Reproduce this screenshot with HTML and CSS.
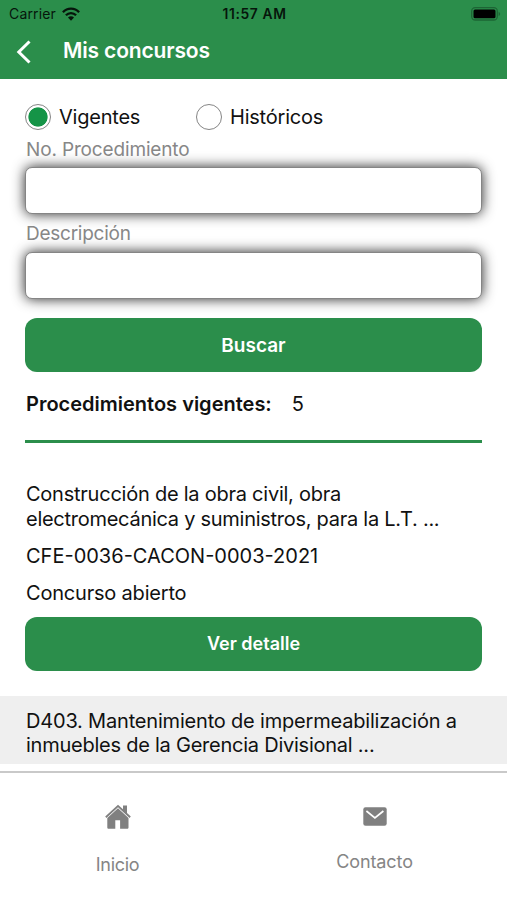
FILE: index.html
```html
<!DOCTYPE html>
<html lang="es">
<head>
<meta charset="utf-8">
<title>Mis concursos</title>
<link rel="stylesheet" href="styles.css">
</head>
<body>
<header class="header">
  <div class="status">
    <div class="carrier"><span class="carrier-name">Carrier</span>
      <svg class="wifi" width="18" height="14" viewBox="0 0 18 14" fill="none" stroke="#06150b" stroke-width="2.3"><path d="M.9 5.2C5.4.3 12.6.3 17.1 5.2M3.9 8.3c2.9-3 7.3-3 10.2 0"/><path d="M9 13.7l-3-3.2c1.7-1.6 4.3-1.6 6 0z" fill="#06150b" stroke="none"/></svg>
    </div>
    <span class="time">11:57 AM</span>
    <svg class="battery" width="30" height="14" viewBox="0 0 30 14"><rect x=".7" y=".7" width="25.6" height="12.3" rx="3.5" fill="none" stroke="#1d6535" stroke-width="1.3"/><rect x="2.5" y="2.5" width="22" height="8.8" rx="1.5"/><path d="M27.6 4.7c2 .8 2 3.5 0 4.3z" fill="#1d6535"/></svg>
  </div>
  <div class="titlebar">
    <svg class="back" width="16" height="24" viewBox="0 0 16 24" fill="none" stroke="#fff" stroke-width="3"><path d="M13.5 1.5L2.8 12l10.7 10.5"/></svg>
    <h1 class="title">Mis concursos</h1>
  </div>
</header>
<main class="content">
  <form class="search">
    <div class="radios">
      <div class="option"><span class="radio checked"></span><span class="vigentes">Vigentes</span></div>
      <div class="option"><span class="radio"></span><span class="historicos">Históricos</span></div>
    </div>
    <label class="label procedure" for="num">No. Procedimiento</label>
    <input class="field" id="num">
    <label class="label description" for="desc">Descripción</label>
    <input class="field" id="desc">
    <button class="button" type="button"><span class="buscar">Buscar</span></button>
  </form>
  <div class="summary"><strong class="summary-label">Procedimientos vigentes:</strong><span>5</span></div>
  <article class="item">
    <p class="text desc"><span class="d1">Construcción de la obra civil, obra</span><br><span class="d2">electromecánica y suministros, para la L.T. ...</span></p>
    <p class="text code">CFE-0036-CACON-0003-2021</p>
    <p class="text state">Concurso abierto</p>
    <button class="button" type="button"><span class="detalle">Ver detalle</span></button>
  </article>
  <article class="item shaded">
    <p class="text desc"><span class="m1">D403. Mantenimiento de impermeabilización a</span><br><span class="m2">inmuebles de la Gerencia Divisional ...</span></p>
  </article>
</main>
<nav class="tabs">
  <div class="tab home">
    <svg width="26" height="26" viewBox="0 0 26 26" fill="#808080"><path d="M13 .7L.2 12.6l1.2 1.3L13 3.2l11.6 10.7 1.2-1.3-3.8-3.6V1.5h-4v3.8z"/><path d="M13 4.2L2.3 14v9.4c0 .9.5 1.4 1.4 1.4h6.6v-8.6h4.8v8.6h7c.9 0 1.4-.5 1.4-1.4V14z"/></svg>
    <span class="inicio">Inicio</span>
  </div>
  <div class="tab contact">
    <svg width="24" height="19" viewBox="0 0 24 19"><rect x=".3" y=".3" width="23.4" height="18.4" rx="2.2" fill="#808080"/><path d="M3.4 4l8.5 7 8.5-7" fill="none" stroke="#fff" stroke-width="1.7"/></svg>
    <span class="contacto">Contacto</span>
  </div>
</nav>
</body>
</html>
```

FILE: styles.css
```css
* { box-sizing: border-box; }
body {
  margin: 0;
  width: 507px;
  height: 900px;
  overflow: hidden;
  display: flex;
  flex-direction: column;
  background: #fff;
  color: #111;
  font: 20px/24.5px Inter, "Liberation Sans", sans-serif;
}
span, strong { white-space: nowrap; }
.header { height: 79px; flex: none; background: #2b8e4b; }
.status {
  height: 27px;
  display: grid;
  grid-template-columns: 1fr auto 1fr;
  align-items: center;
  padding: 0 6px 0 9px;
  font-size: 14px;
  line-height: 20px;
  color: #06150b;
}
.carrier { display: flex; align-items: center; gap: 6px; }
.carrier-name { letter-spacing: .15px; }
.time { font-weight: 600; font-size: 13.8px; letter-spacing: .65px; margin-right: 1px; }
.battery { justify-self: end; }
.titlebar { height: 49px; display: flex; align-items: center; padding-left: 16px; }
.title { margin: 0 0 1px 31px; color: #fff; font-size: 21px; font-weight: 600; line-height: 26px; letter-spacing: -.15px; }
.content { flex: 1; min-height: 0; overflow: hidden; }
.search { padding: 24px 25px 0; }
.radios { display: flex; height: 28px; letter-spacing: -.22px; }
.option { display: flex; align-items: center; gap: 8px; width: 171px; }
.radio { width: 26px; height: 26px; flex: none; border: 1.3px solid #858585; border-radius: 50%; background: #fff; }
.radio.checked { background: radial-gradient(circle, #159447 9.2px, #fff 10px); }
.label { display: block; height: 24px; margin-top: 7px; color: #878787; padding-left: 1px; font-size: 19px; letter-spacing: -.15px; }
.field {
  display: block;
  width: 100%;
  height: 47px;
  margin-top: 5px;
  border: 1.5px solid #858585;
  border-radius: 7px;
  background: #fff;
  box-shadow: 0 0 13px rgba(0, 0, 0, .85);
}
.description { margin-top: 8px; letter-spacing: -.25px; }
.description + .field { margin-top: 6px; }
.button {
  display: block;
  width: 100%;
  height: 53.5px;
  padding: 0;
  border: 0;
  border-radius: 12px;
  background: #2b8e4b;
  color: #fff;
  font: 600 19px/24px Inter, "Liberation Sans", sans-serif;
}
.buscar { position: relative; top: 1px; }
.detalle { font-size: 18px; }
.search .button { margin-top: 19px; }
.summary {
  display: flex;
  gap: 20px;
  height: 71px;
  margin: 0 25px;
  padding: 20.5px 0 0 1px;
  border-bottom: 3px solid #2b8e4b;
}
.summary-label { font-weight: 600; }
.item { padding: 39.5px 25px 25px; }
.text { margin: 0 0 12.5px 1px; }
.item .state { margin-bottom: 12px; letter-spacing: -.2px; }
.d1 { letter-spacing: -.24px; }
.d2 { letter-spacing: -.27px; }
.m1 { letter-spacing: -.19px; }
.m2 { letter-spacing: -.24px; }
.shaded { background: #efefef; height: 68px; padding: 13px 25px 0; }
.tabs {
  height: 129px;
  flex: none;
  display: flex;
  border-top: 2px solid #c9c9c9;
  color: #858585;
  font-size: 18px;
}
.tab { display: flex; flex: none; flex-direction: column; align-items: center; }
.home { width: 235px; padding-top: 31px; gap: 23px; }
.contact { width: 279px; padding-top: 34px; gap: 24px; }
.inicio { letter-spacing: -.3px; }
.contacto { letter-spacing: -.1px; }
```
